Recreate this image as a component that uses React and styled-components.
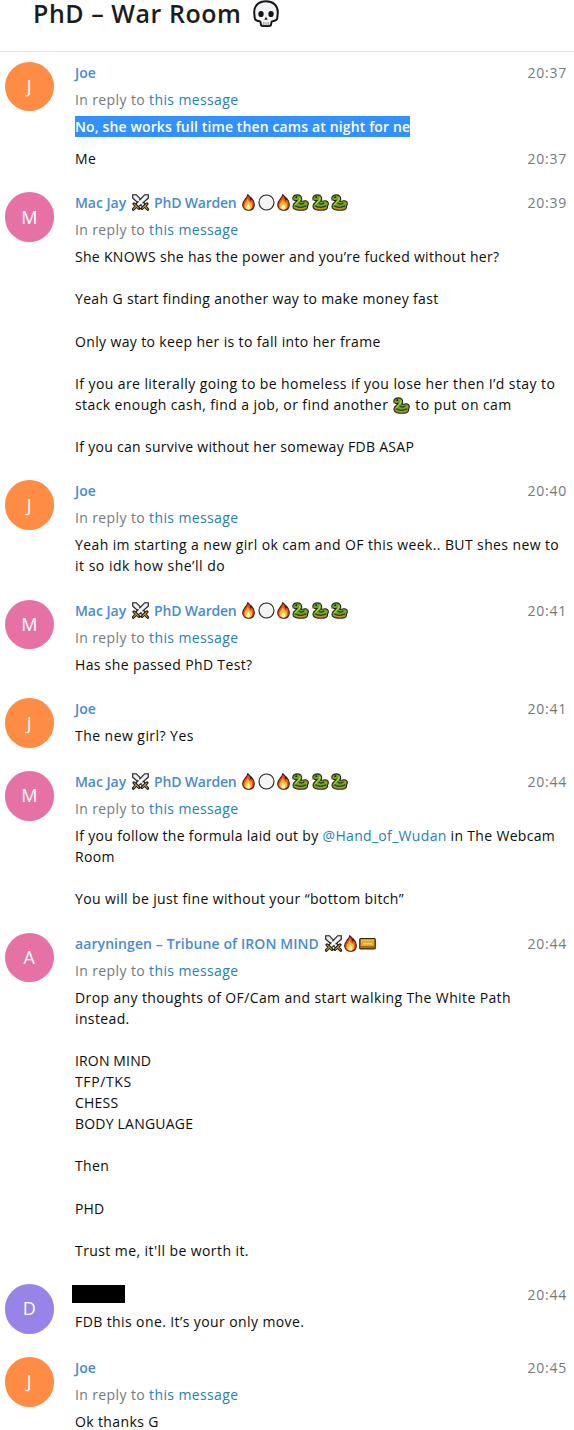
import React from 'react';
import styled, { createGlobalStyle } from 'styled-components';

const GlobalStyle = createGlobalStyle`
  body {
    margin: 0;
    background: #fff;
    overflow: hidden;
  }
`;

const Page = styled.div`
  width: 574px;
  height: 1430px;
  overflow: hidden;
  background: #fff;
  color: #0c0c0c;
  font-family: 'Open Sans', 'Noto Sans', sans-serif;
  font-size: 14px;
  line-height: 21.09px;
`;

const Header = styled.header`
  display: flex;
  align-items: flex-start;
  box-sizing: border-box;
  height: 52px;
  padding-left: 33px;
  border-bottom: 1px solid #dfe1e5;
`;

const Title = styled.h1`
  margin: 0 10px 0 0;
  color: #1c1c1c;
  font-size: 25px;
  font-weight: 600;
  line-height: 26px;
  letter-spacing: 0.55px;
  white-space: pre;
`;

const History = styled.main`
  display: flex;
  flex-direction: column;
  gap: 23.4px;
  padding: 9.8px 7px 0 4.5px;
`;

const Group = styled.section`
  display: flex;
  gap: 21px;
`;

const Avatar = styled.div`
  display: flex;
  flex: none;
  align-items: center;
  justify-content: center;
  width: 49.5px;
  height: 49.5px;
  border-radius: 50%;
  background: ${(p) => p.$color};
  color: #fff;
  font-size: 18px;
  font-weight: 500;
`;

const Content = styled.div`
  flex: 1;
  min-width: 0;
`;

const TopLine = styled.div`
  display: flex;
  justify-content: space-between;
  height: 21.09px;
`;

const Name = styled.div`
  display: flex;
  align-items: center;
  color: #4a8ad4;
  font-weight: 600;
`;

const NamePart = styled.span`
  margin-left: ${(p) => p.$ml || 0}px;
  letter-spacing: ${(p) => p.$track || 0}px;
  white-space: pre;
`;

const Time = styled.time`
  color: #74797d;
  letter-spacing: 0.75px;
`;

const Reply = styled.div`
  margin-top: 5.9px;
  color: #74797d;
  letter-spacing: 0.38px;
`;

const Link = styled.a`
  color: #2580bd;
`;

const Text = styled.div`
  margin-top: 5.9px;
`;

const Line = styled.div`
  height: 21.09px;
  letter-spacing: ${(p) => p.$track ?? 0.37}px;
  white-space: pre;
`;

const Selected = styled.span`
  display: inline-block;
  height: 21px;
  background: #3390ff;
  color: #fff;
  font-weight: 600;
  letter-spacing: 0.13px;
`;

const Joined = styled.div`
  display: flex;
  justify-content: space-between;
  margin-top: 11px;
  letter-spacing: 0.37px;
`;

const Redacted = styled.div`
  width: 53px;
  height: 18px;
  margin: 1px 0 0 -3px;
  background: #000;
`;

const Icon = styled.svg`
  display: block;
  flex: none;
  margin-left: ${(p) => p.$ml || 0}px;
`;

const InlineSnake = styled.span`
  display: inline-block;
  margin: 0 1px;
  vertical-align: -4px;
`;

const Skull = () => (
  <Icon width="28" height="28" viewBox="0 0 28 28">
    <path
      d="M14 1.2C6.8 1.2 2.2 5.6 2.2 12c0 2.4.4 3.6.4 5.2 0 2.6 2.3 3.7 5.2 4.1.9.2.9 1 1 2.5.1 1.5.8 2.3 2.2 2.3h6c1.4 0 2.1-.8 2.2-2.3.1-1.5.1-2.3 1-2.5 2.9-.4 5.2-1.5 5.2-4.1 0-1.6.4-2.8.4-5.2C25.8 5.6 21.2 1.2 14 1.2z"
      fill="#f1f2f3"
      stroke="#151515"
      strokeWidth="2"
    />
    <ellipse cx="9" cy="14" rx="2.7" ry="3.1" fill="#151515" />
    <ellipse cx="19" cy="14" rx="2.7" ry="3.1" fill="#151515" />
    <path d="M14 16.8l-1.700 3h3.400z" fill="#151515" />
    <path d="M11.800 22v3.500M14 22.300v3.200M16.200 22v3.500" stroke="#8c8c8c" />
  </Icon>
);

const Swords = ({ ml }) => (
  <Icon $ml={ml} width="17" height="17" viewBox="0 0 17 17">
    <path d="M.7.7h3.600l9 9.300-2.800 2.800L.7 4.200z" fill="#ddd" stroke="#1b1b1b" strokeWidth="1.100" />
    <path d="M16.300.7h-3.600l-9 9.300 2.800 2.800 9.800-8.600z" fill="#ddd" stroke="#1b1b1b" strokeWidth="1.100" />
    <path d="M2.500 2.500l9 8.700M14.500 2.500l-9 8.700" stroke="#fff" strokeWidth="1.200" />
    <path d="M2 9.800l5 4.700M15 9.800l-5 4.700M4 12.400l-2.700 2.900M13 12.400l2.700 2.900" stroke="#1b1b1b" strokeWidth="3" strokeLinecap="round" />
    <path d="M2.300 10.200l4.200 4M14.700 10.200l-4.200 4M3.800 12.600l-2.200 2.400M13.200 12.600l2.200 2.400" stroke="#c99a3c" strokeWidth="1.100" strokeLinecap="round" />
  </Icon>
);

const Fire = ({ ml }) => (
  <Icon $ml={ml} width="13" height="17" viewBox="0 0 13 17">
    <path
      d="M5.800.8c2.300 1.600 3 3.200 3 5 .6-.3.800-.9.800-1.500 1.700 1.800 2.700 4 2.700 6.200 0 3.600-2.300 5.800-5.600 5.800S.7 14.100.7 10.700C.7 8.600 1.700 7 3 5.500 4.700 3.700 5.600 2.500 5.800.8z"
      fill="#f0521d"
      stroke="#3a1a12"
      strokeWidth="1.100"
    />
    <path d="M5.600 5.200c.6 1.500 2.200 2.200 2.800 3.700.5-.3.700-.6.800-1 1.700 3.700 1.200 7.600-2.600 7.600-3 0-4.300-1.800-4.200-4.200.1-2.300 2.800-3.400 3.200-6.100z" fill="#fbb62b" />
    <path d="M6.300 9.500c.6 1.300 2 2 2 3.700 0 1.500-.8 2.300-2 2.300s-2.100-.8-2.100-2.200c0-1.500 1.700-2.300 2.100-3.800z" fill="#fff2b0" />
  </Icon>
);

const Circle = ({ ml }) => (
  <Icon $ml={ml} width="17" height="17" viewBox="0 0 17 17">
    <circle cx="8.500" cy="8.500" r="7.500" fill="#f4f4f4" stroke="#222" strokeWidth="1.100" />
  </Icon>
);

const Snake = ({ ml }) => (
  <Icon $ml={ml} width="17" height="17" viewBox="0 0 17 17">
    <path
      d="M.8 4C1.200 1.800 3.100.9 5.300.9c2.800 0 4.400 1.600 4.400 3.900 0 1-.3 1.700-.9 2.400 1.600.4 2.800-.3 4.200-.5 2.100-.2 3.500 1.300 3.300 3.300 0 .9-.4 1.500-.8 2 .5 2.300-1.100 4.100-4 4.100H6.300C3.300 16.100.9 14.700 1 12c.1-1.700 1-2.600 2.200-3.500 1.100-.8 1.800-1.400 1.900-2.100C3.400 7 .6 6.500.8 4z"
      fill="#6aa52e"
      stroke="#2b2616"
      strokeWidth="1.100"
    />
    <path d="M7.900 3.400c.5 1.800-.3 3.200-1.900 4.400-1.400 1-2.700 1.900-2.800 3.700" fill="none" stroke="#a7cf3c" strokeWidth="1.200" />
    <path d="M3.200 11.700c2.500 2.200 7.700 2 11 .2" fill="none" stroke="#2f3a17" strokeWidth="1.200" />
    <path d="M6.500 8.700c1.500 1.500 4 1.600 6 .1" fill="none" stroke="#2f3a17" strokeWidth="1.200" />
    <path d="M3.400 13.500c2.600 1.600 7.300 1.400 10.200.2" fill="none" stroke="#d08a2c" strokeWidth="1.100" />
    <path d="M12.500 9.900c1 .1 1.700-.2 2.200-.7" fill="none" stroke="#d08a2c" strokeWidth="1.100" />
    <circle cx="4.300" cy="3.200" r=".9" fill="#161616" />
    <path d="M.4 6l2-.8" stroke="#c53626" />
  </Icon>
);

const GoldBar = ({ ml }) => (
  <Icon $ml={ml} width="17" height="17" viewBox="0 0 17 17">
    <rect x=".8" y="3.600" width="15.400" height="10.300" rx="1" fill="#e5a62a" stroke="#33240d" strokeWidth="1.300" />
    <path d="M2 5.300h13" stroke="#f4bd42" strokeWidth="1.500" />
    <path d="M4 8.700h9" stroke="#ffe596" strokeWidth="1.100" />
    <path d="M2 12h13" stroke="#a56a14" strokeWidth="2" />
  </Icon>
);

const MacJay = () => (
  <Name>
    <NamePart $track={-0.05}>Mac Jay</NamePart>
    <Swords ml={6} />
    <NamePart $ml={5} $track={-0.2}>PhD Warden</NamePart>
    <Fire ml={5.5} />
    <Circle ml={2.5} />
    <Fire ml={2} />
    <Snake ml={2.5} />
    <Snake ml={2.5} />
    <Snake ml={2.5} />
  </Name>
);

const Joe = () => (
  <Name>
    <NamePart>Joe</NamePart>
  </Name>
);

const Aaryningen = () => (
  <Name>
    <NamePart $track={0.09}>aaryningen – Tribune of IRON MIND</NamePart>
    <Swords ml={6} />
    <Fire ml={2} />
    <GoldBar ml={2} />
  </Name>
);

const colors = { J: '#ff8c44', M: '#e671a5', A: '#e671a5', D: '#9884e8' };

// A line is [text, letter spacing]; an empty string is a blank line.
const messages = [
  {
    letter: 'J',
    name: <Joe />,
    time: '20:37',
    reply: true,
    lines: [[<Selected>No, she works full time then cams at night for ne</Selected>]],
    joined: ['Me', '20:37'],
  },
  {
    letter: 'M',
    name: <MacJay />,
    time: '20:39',
    reply: true,
    lines: [
      ['She KNOWS she has the power and you’re fucked without her?', 0.3],
      [''],
      ['Yeah G start finding another way to make money fast', 0.34],
      [''],
      ['Only way to keep her is to fall into her frame', 0.36],
      [''],
      ['If you are literally going to be homeless if you lose her then I’d stay to', 0.41],
      [
        <>
          stack enough cash, find a job, or find another <InlineSnake><Snake /></InlineSnake> to put on cam
        </>,
        0.41,
      ],
      [''],
      ['If you can survive without her someway FDB ASAP', 0.3],
    ],
  },
  {
    letter: 'J',
    name: <Joe />,
    time: '20:40',
    reply: true,
    lines: [
      ['Yeah im starting a new girl ok cam and OF this week.. BUT shes new to', 0.39],
      ['it so idk how she’ll do', 0.5],
    ],
  },
  { letter: 'M', name: <MacJay />, time: '20:41', reply: true, lines: [['Has she passed PhD Test?', 0.35]] },
  { letter: 'J', name: <Joe />, time: '20:41', lines: [['The new girl? Yes', 0.45]] },
  {
    letter: 'M',
    name: <MacJay />,
    time: '20:44',
    reply: true,
    lines: [
      [
        <>
          If you follow the formula laid out by <Link>@Hand_of_Wudan</Link> in The Webcam
        </>,
        0.32,
      ],
      ['Room'],
      [''],
      ['You will be just fine without your “bottom bitch”', 0.38],
    ],
  },
  {
    letter: 'A',
    name: <Aaryningen />,
    time: '20:44',
    reply: true,
    lines: [
      ['Drop any thoughts of OF/Cam and start walking The White Path', 0.38],
      ['instead.'],
      [''],
      ['IRON MIND', 0.15],
      ['TFP/TKS', 0.6],
      ['CHESS', 0.2],
      ['BODY LANGUAGE', 0.21],
      [''],
      ['Then'],
      [''],
      ['PHD', 0.1],
      [''],
      ["Trust me, it'll be worth it.", 0.42],
    ],
  },
  { letter: 'D', name: <Redacted />, time: '20:44', lines: [['FDB this one. It’s your only move.', 0.4]] },
  { letter: 'J', name: <Joe />, time: '20:45', reply: true, lines: [['Ok thanks G']] },
];

const Message = ({ letter, name, time, reply, lines, joined }) => (
  <Group>
    <Avatar $color={colors[letter]}>{letter}</Avatar>
    <Content>
      <TopLine>
        {name}
        <Time>{time}</Time>
      </TopLine>
      {reply && (
        <Reply>
          In reply to <Link>this message</Link>
        </Reply>
      )}
      <Text>
        {lines.map(([text, track], index) => (
          <Line key={index} $track={track}>
            {text}
          </Line>
        ))}
      </Text>
      {joined && (
        <Joined>
          <span>{joined[0]}</span>
          <Time>{joined[1]}</Time>
        </Joined>
      )}
    </Content>
  </Group>
);

const App = () => (
  <>
    <GlobalStyle />
    <Page>
      <Header>
        <Title>PhD – War Room</Title>
        <Skull />
      </Header>
      <History>
        {messages.map((message, index) => (
          <Message key={index} {...message} />
        ))}
      </History>
    </Page>
  </>
);

export default App;
